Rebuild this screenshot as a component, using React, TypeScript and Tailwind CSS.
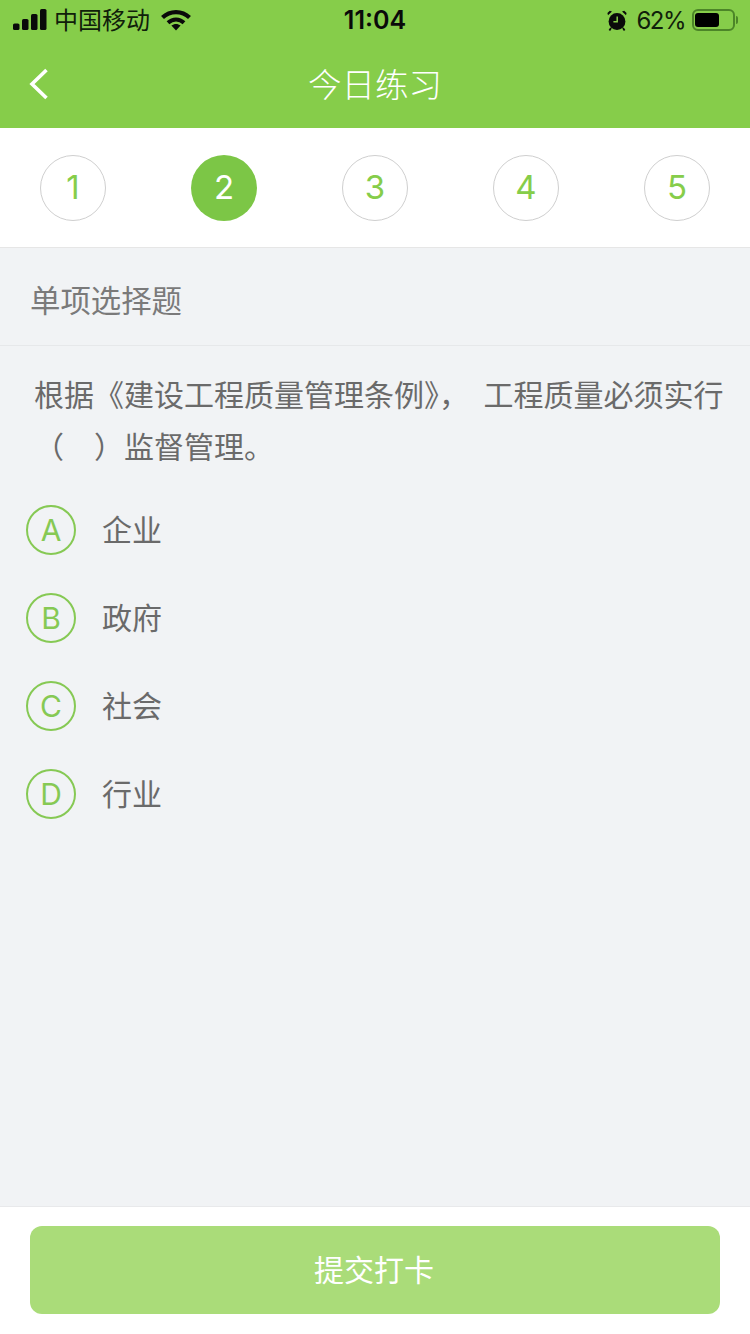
const SANS = "font-['Inter','Noto_Sans_CJK_SC',sans-serif]";

function StatusBar() {
  return (
    <div className="relative flex h-10 items-center justify-between pl-[13px] pr-[12px] text-black">
      <div className="flex items-center">
        <svg className="-mt-[1px]" width="34" height="21" viewBox="0 0 34 21" fill="#0a0a0a">
          <rect x="0" y="14.5" width="6.5" height="6.5" rx="1.6" />
          <rect x="9" y="10" width="6.5" height="11" rx="1.6" />
          <rect x="18" y="5" width="6.5" height="16" rx="1.6" />
          <rect x="27" y="0" width="6.5" height="21" rx="1.6" />
        </svg>
        <span className="ml-[7px] mt-[2px] text-[24px] leading-8 text-[#10200a]">中国移动</span>
        <svg className="ml-[11px]" width="30" height="22" viewBox="0 0 30 22" fill="none">
          <path d="M1.5 8.5C9 1.2 21 1.2 28.5 8.5" stroke="#0a0a0a" strokeWidth="4.2" />
          <path d="M7 13.8c4.8-4.4 11.2-4.4 16 0" stroke="#0a0a0a" strokeWidth="4" />
          <path d="M10.4 16.6c2.9-2.2 6.3-2.2 9.2 0L15 21.5z" fill="#0a0a0a" />
        </svg>
      </div>
      <span className="absolute left-0 right-0 text-center text-[25px] font-semibold leading-8 text-[#0a0a0a]">11:04</span>
      <div className="flex items-center">
        <svg width="20" height="21" viewBox="0 0 20 21" fill="#0a0a0a">
          <circle cx="10" cy="11.5" r="8.4" />
          <path d="M1 5.2 5 1.6 2.8.8.4 3zM19 5.2 15 1.6 17.2.8 19.6 3z" />
          <path d="M4 18l-1.6 2.4M16 18l1.6 2.4" stroke="#0a0a0a" strokeWidth="1.8" />
          <path d="M10.2 6.6v5.2H6.4" stroke="#86cd4a" strokeWidth="1.5" fill="none" />
        </svg>
        <span className="ml-[9px] mt-[2px] text-[24px] leading-8 tracking-[-1.5px] text-[#10200a]">62%</span>
        <div className="ml-[7px] flex h-[22px] w-[43px] items-center rounded-[6px] border-2 border-[#4c8528] p-[1px]">
          <div className="h-[14px] w-[24px] rounded-[3px] bg-black" />
        </div>
        <div className="ml-[1px] h-[8px] w-[2px] rounded-r-sm bg-[#4c8528]" />
      </div>
    </div>
  );
}

function Step({ n, active }: { n: number; active?: boolean }) {
  return (
    <div
      className={
        active
          ? "flex h-[66px] w-[66px] items-center justify-center rounded-full bg-[#7cc646] text-[33px] text-white"
          : "flex h-[66px] w-[66px] items-center justify-center rounded-full border border-[#cfcfcf] text-[33px] text-[#86cd4a]"
      }
    >
      {n}
    </div>
  );
}

function Option({ letter, text }: { letter: string; text: string }) {
  return (
    <div className="flex h-[88px] items-center pl-[26px]">
      <div className="flex h-[50px] w-[50px] items-center justify-center rounded-full border-2 border-[#86c954] text-[30px] text-[#86c954]">
        {letter}
      </div>
      <span className="ml-[26px] text-[30px] text-[#6a6a6a]">{text}</span>
    </div>
  );
}

export default function App() {
  return (
    <div className={`${SANS} flex h-[1334px] w-[750px] flex-col overflow-hidden bg-[#f1f3f5]`}>
      <header className="h-[128px] bg-[#86cd4a]">
        <StatusBar />
        <div className="relative flex h-[88px] items-center justify-center">
          <svg className="absolute left-[28px] top-[27px]" width="22" height="34" viewBox="0 0 22 34" fill="none">
            <path d="M18.5 3 4 17l14.5 14" stroke="#fff" strokeWidth="3.6" />
          </svg>
          <span className="pt-[3px] text-[33.5px] font-light text-white">今日练习</span>
        </div>
      </header>

      <div className="flex h-[120px] items-center justify-between border-b border-[#e6e6e6] bg-white px-10 pt-[1px]">
        {[1, 2, 3, 4, 5].map((n) => (
          <Step key={n} n={n} active={n === 2} />
        ))}
      </div>

      <div className="flex h-[98px] items-center border-b border-[#e6e8ea] pl-[30px] pt-[10px] text-[30.4px] text-[#7a7a7a]">
        单项选择题
      </div>

      <p className="mt-[23px] h-[104px] whitespace-nowrap pl-[34px] text-[30px] leading-[52px] text-[#6a6a6a]">
        根据《建设工程质量管理条例》，<span className="ml-[6px]"> 工程质量必须实行</span>
        <br />
        （　）监督管理。
      </p>

      <div className="mt-[13px] flex flex-1 flex-col">
        <Option letter="A" text="企业" />
        <Option letter="B" text="政府" />
        <Option letter="C" text="社会" />
        <Option letter="D" text="行业" />
      </div>

      <footer className="h-[128px] border-t border-[#e8e9eb] bg-white px-[30px] pt-[19px]">
        <button className="flex h-[88px] w-full items-center justify-center rounded-[12px] bg-[#aadc79] pr-[2px] text-[30px] text-white">
          提交打卡
        </button>
      </footer>
    </div>
  );
}
